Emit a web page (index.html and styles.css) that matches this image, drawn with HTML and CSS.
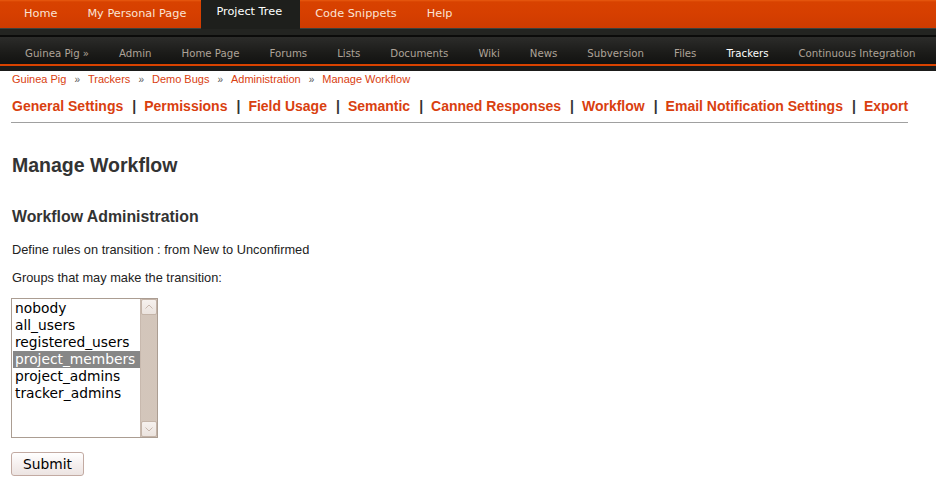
FILE: index.html
```html
<!DOCTYPE html>
<html>
<head>
<meta charset="utf-8">
<title>Manage Workflow</title>
<link rel="stylesheet" href="styles.css">
</head>
<body>
<div class="topbar">
  <a class="top-item" href="#">Home</a>
  <a class="top-item" href="#">My Personal Page</a>
  <a class="top-item active" href="#">Project Tree</a>
  <a class="top-item" href="#">Code Snippets</a>
  <a class="top-item" href="#">Help</a>
</div>
<div class="gap-strip"></div>
<div class="subbar">
  <a class="sub-item" href="#">Guinea Pig »</a>
  <a class="sub-item" href="#">Admin</a>
  <a class="sub-item" href="#">Home Page</a>
  <a class="sub-item" href="#">Forums</a>
  <a class="sub-item" href="#">Lists</a>
  <a class="sub-item" href="#">Documents</a>
  <a class="sub-item" href="#">Wiki</a>
  <a class="sub-item" href="#">News</a>
  <a class="sub-item" href="#">Subversion</a>
  <a class="sub-item" href="#">Files</a>
  <a class="sub-item active" href="#">Trackers</a>
  <a class="sub-item" href="#">Continuous Integration</a>
</div>
<div class="bottom-strip"></div>

<div class="content">
  <div class="breadcrumb">
    <a href="#">Guinea Pig</a><span class="sep">»</span><a href="#">Trackers</a><span class="sep">»</span><a href="#">Demo Bugs</a><span class="sep">»</span><a href="#">Administration</a><span class="sep">»</span><a href="#">Manage Workflow</a>
  </div>
  <div class="admin-tabs">
    <a href="#">General Settings</a><span class="bar">|</span><a href="#">Permissions</a><span class="bar">|</span><a href="#">Field Usage</a><span class="bar">|</span><a href="#">Semantic</a><span class="bar">|</span><a href="#">Canned Responses</a><span class="bar">|</span><a href="#">Workflow</a><span class="bar">|</span><a href="#">Email Notification Settings</a><span class="bar">|</span><a href="#">Export</a>
  </div>

  <h2 class="page-title">Manage Workflow</h2>
  <h3 class="section-title">Workflow Administration</h3>
  <p class="line first">Define rules on transition : from New to Unconfirmed</p>
  <p class="line">Groups that may make the transition:</p>

  <div class="listbox" role="listbox">
    <div class="options">
      <div class="option">nobody</div>
      <div class="option">all_users</div>
      <div class="option">registered_users</div>
      <div class="option selected">project_members</div>
      <div class="option">project_admins</div>
      <div class="option">tracker_admins</div>
    </div>
    <div class="scrollbar">
      <div class="sb-btn">
        <svg width="14" height="14" viewBox="0 0 14 14"><path d="M3.5 8.5 L7 5 L10.5 8.5" fill="none" stroke="#c8b8ae" stroke-width="1"/></svg>
      </div>
      <div class="sb-track"></div>
      <div class="sb-btn">
        <svg width="14" height="14" viewBox="0 0 14 14"><path d="M3.5 5.5 L7 9 L10.5 5.5" fill="none" stroke="#c8b8ae" stroke-width="1"/></svg>
      </div>
    </div>
  </div>

  <button class="submit" type="button">Submit</button>
</div>
</body>
</html>
```
FILE: styles.css
```css
html, body {
  margin: 0;
  padding: 0;
  background: #ffffff;
}

body {
  font-family: "Liberation Sans", Arial, sans-serif;
  color: #333333;
}

a {
  text-decoration: none;
}

/* ---------- top bar ---------- */
.topbar {
  display: flex;
  height: 28px;
  padding-left: 9px;
  background: linear-gradient(#e85a10 0px, #d84200 2px, #d63f00 14px, #cf3b00 28px);
  border-bottom: 1px solid #3d413d;
  font-family: "DejaVu Sans", Verdana, sans-serif;
  font-size: 11.3px;
  white-space: nowrap;
}

.top-item {
  display: block;
  flex: none;
  padding: 0 15px;
  line-height: 28px;
  color: #fbe3d4;
}

.top-item.active {
  height: 29px;
  margin-bottom: -1px;
  line-height: 23px;
  padding: 0 18px 0 15px;
  background: #1e1f1c;
  color: #ffffff;
}

.gap-strip {
  height: 6px;
  background: #232421;
  border-bottom: 2px solid #0b0b0a;
}

/* ---------- sub bar ---------- */
.subbar {
  display: flex;
  height: 27px;
  padding-left: 10px;
  background: linear-gradient(#2c2c2a, #1b1b19 60%, #121211);
  border-bottom: 2px solid #d84200;
  font-family: "DejaVu Sans", Verdana, sans-serif;
  font-size: 10.2px;
  white-space: nowrap;
  overflow: hidden;
}

.sub-item {
  display: block;
  flex: none;
  padding: 0 15px;
  line-height: 33px;
  color: #aea398;
}

.sub-item.active {
  color: #ffffff;
  height: 27px;
  border-bottom: 2px solid #ffffff;
  margin-bottom: -2px;
}

.bottom-strip {
  height: 5px;
  background: #1b1b1a;
}

/* ---------- content ---------- */
.content {
  padding: 0 28px 0 11px;
}

.breadcrumb {
  padding: 1px 0 0 1px;
  font-size: 11px;
  line-height: 14px;
  color: #444444;
  white-space: nowrap;
}

.breadcrumb a {
  color: #d9400f;
}

.breadcrumb .sep {
  display: inline-block;
  margin: 0 8px 0 8px;
  color: #555555;
  font-size: 10px;
}

.admin-tabs {
  margin-top: 11px;
  padding: 0 0 7px 1px;
  border-bottom: 1px solid #a0a0a0;
  font-size: 14px;
  font-weight: bold;
  line-height: 17px;
  white-space: nowrap;
}

.admin-tabs a {
  color: #d9400f;
}

.admin-tabs .bar {
  margin: 0 8px 0 9px;
  color: #333333;
  font-weight: bold;
}

.page-title {
  margin: 31px 0 0 1px;
  font-size: 19.5px;
  line-height: 23px;
  font-weight: bold;
  color: #333333;
}

.section-title {
  margin: 30px 0 0 1px;
  font-size: 15.85px;
  line-height: 19px;
  font-weight: bold;
  color: #333333;
}

.line {
  margin: 0 0 0 1px;
  font-size: 12.8px;
  line-height: 16px;
  color: #222222;
}

.line.first {
  margin-top: 16px;
}

.line + .line {
  margin-top: 12px;
}

/* ---------- listbox ---------- */
.listbox {
  display: flex;
  width: 145px;
  height: 138px;
  margin-top: 12px;
  border: 1px solid #ab9d92;
  background: #ffffff;
}

.options {
  flex: 1;
  padding: 1px 0 0 1px;
  font-family: "DejaVu Sans", Verdana, sans-serif;
  font-size: 13.8px;
  line-height: 17px;
  color: #000000;
}

.option {
  padding-left: 2px;
  height: 17px;
  white-space: nowrap;
}

.option.selected {
  background: #878787;
  color: #ffffff;
}

.scrollbar {
  display: flex;
  flex-direction: column;
  width: 16px;
  background-color: #d8cac0;
  background-image: radial-gradient(#cdbfb4 0.6px, transparent 0.8px);
  background-size: 2px 2px;
  border-left: 1px solid #c8b9ae;
}

.sb-btn {
  width: 14px;
  height: 14px;
  border: 1px solid #c4b4a8;
  border-radius: 2px;
  background: linear-gradient(#f6f1ee, #ebe3de);
}

.sb-btn svg {
  display: block;
}

.sb-track {
  flex: 1;
}

/* ---------- submit ---------- */
.submit {
  display: block;
  margin-top: 14px;
  width: 73px;
  height: 24px;
  padding: 0;
  border: 1px solid #c2aaa2;
  border-radius: 3px;
  background: linear-gradient(#ffffff, #f6f0ef 50%, #ece4e2);
  font-family: "DejaVu Sans", Verdana, sans-serif;
  font-size: 13.8px;
  color: #000000;
}
```
